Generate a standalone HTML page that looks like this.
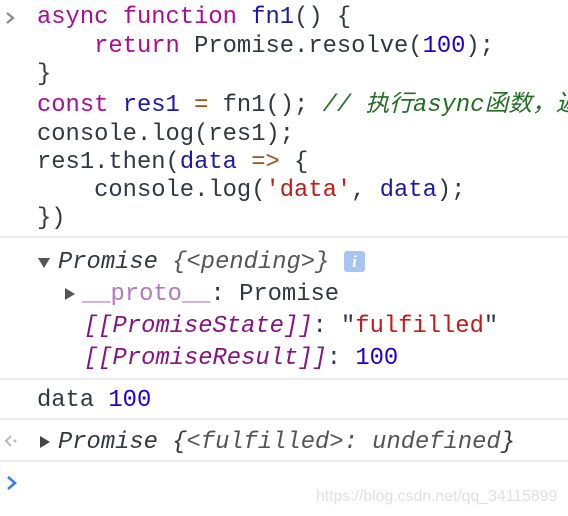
<!DOCTYPE html>
<html><head><meta charset="utf-8"><style>
body{margin:0;width:568px;height:516px;background:#fff;overflow:hidden;position:relative;font-family:"Liberation Mono","Noto Sans CJK SC",monospace;font-size:23.8px;color:#303942}
#w{position:absolute;left:0;top:0;width:568px;height:516px;overflow:hidden}
.l{position:absolute;left:37px;height:28px;line-height:28px;white-space:pre}
.k{color:#aa0d91}.v{color:#1a1aa6}.n{color:#1c00cf}.o{color:#a0501c}.c{color:#236e25;font-style:italic}.s{color:#c41a16}
.i{font-style:italic}.g{color:#555}.p{color:#881280}.lp{color:#b07ac0}.nm{font-style:normal}
.sep{position:absolute;left:0;width:568px;height:2px;background:#ececec}
.tri{position:absolute;width:0;height:0}
</style></head><body><div id="w">
<svg style="position:absolute;left:4px;top:11px" width="12" height="14"><polyline points="3,2 9,7 3,12" fill="none" stroke="#8a8a8a" stroke-width="2.2"/></svg>
<div class="l" style="top:4px"><span class="k">async</span> <span class="k">function</span> <span class="v">fn1</span>() {</div>
<div class="l" style="top:33px">    <span class="k">return</span> Promise.resolve(<span class="n">100</span>);</div>
<div class="l" style="top:61px">}</div>
<div class="l" style="top:92px;width:531px;overflow:hidden"><span class="k">const</span> <span class="v">res1</span> <span class="o">=</span> fn1(); <span class="c">// 执行async函数，返回</span></div>
<div class="l" style="top:121px">console.log(res1);</div>
<div class="l" style="top:149px">res1.then(<span class="v">data</span> <span class="o">=&gt;</span> {</div>
<div class="l" style="top:177px">    console.log(<span class="s">'data'</span>, <span class="v">data</span>);</div>
<div class="l" style="top:205px">})</div>
<div class="sep" style="top:236px"></div>

<div class="tri" style="left:38px;top:258px;border-left:6px solid transparent;border-right:6px solid transparent;border-top:10px solid #555"></div>
<div class="l i" style="left:58px;top:249px">Promise <span class="g">{&lt;pending&gt;}</span></div>
<div style="position:absolute;left:344px;top:251px;width:21px;height:21px;background:#a8c4f0;border-radius:3px;color:#fff;font:italic bold 17px 'Liberation Serif',serif;text-align:center;line-height:21px">i</div>
<div class="tri" style="left:65px;top:288px;border-top:6px solid transparent;border-bottom:6px solid transparent;border-left:10px solid #555"></div>
<div class="l" style="left:82px;top:281px"><span class="lp">__proto__</span>: Promise</div>
<div class="l" style="left:84px;top:313px"><span class="p i">[[PromiseState]]</span>: "<span class="s">fulfilled</span>"</div>
<div class="l" style="left:84px;top:345px"><span class="p i">[[PromiseResult]]</span>: <span class="n">100</span></div>
<div class="sep" style="top:378px"></div>
<div class="l" style="top:387px">data <span class="n">100</span></div>
<div class="sep" style="top:418px"></div>
<svg style="position:absolute;left:3px;top:433px" width="16" height="16"><polyline points="8,3 3,8 8,13" fill="none" stroke="#bbb" stroke-width="2"/><circle cx="12" cy="8" r="1.5" fill="#bbb"/></svg>
<div class="tri" style="left:40px;top:436px;border-top:6px solid transparent;border-bottom:6px solid transparent;border-left:10px solid #444"></div>
<div class="l i" style="left:58px;top:429px">Promise {<span class="g">&lt;fulfilled&gt;: undefined</span>}</div>
<div class="sep" style="top:460px"></div>
<svg style="position:absolute;left:5px;top:475px" width="14" height="16"><polyline points="3,2 10,8 3,14" fill="none" stroke="#3d7be8" stroke-width="2.6"/></svg>
<div style="position:absolute;left:316px;top:488px;font:15.8px 'Liberation Sans',sans-serif;color:#e0e0e0;white-space:nowrap">https://blog.csdn.net/qq_34115899</div>
</div></body></html>
